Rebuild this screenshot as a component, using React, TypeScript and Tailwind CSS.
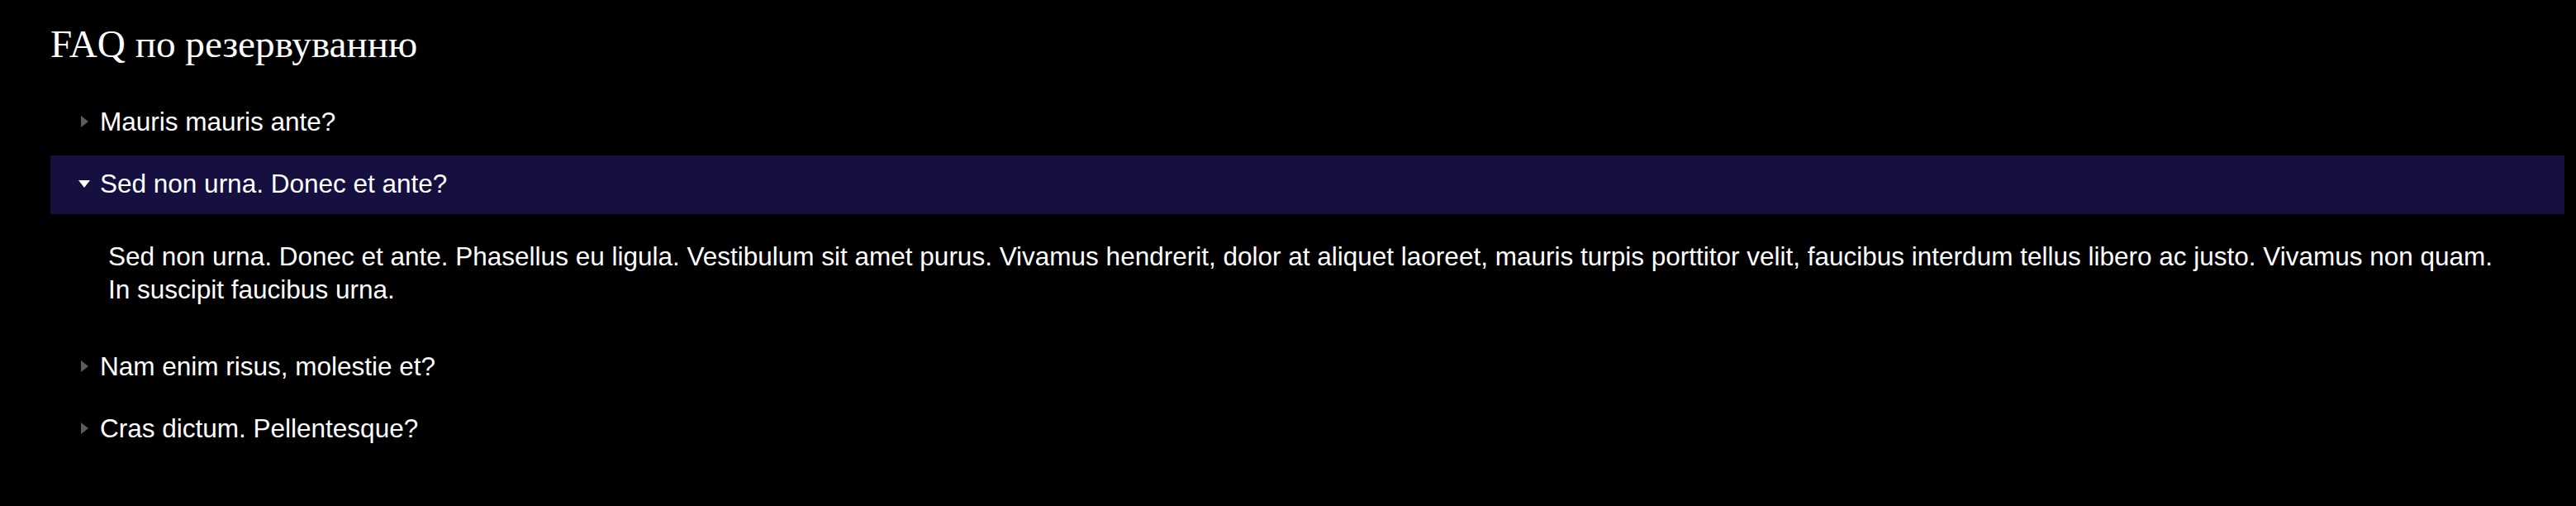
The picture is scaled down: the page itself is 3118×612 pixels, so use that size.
import { useState } from 'react';

const faqs = [
  { q: 'Mauris mauris ante?', a: 'Mauris mauris ante, blandit et, ultrices a, suscipit eget, quam.' },
  {
    q: 'Sed non urna. Donec et ante?',
    a: 'Sed non urna. Donec et ante. Phasellus eu ligula. Vestibulum sit amet purus. Vivamus hendrerit, dolor at aliquet laoreet, mauris turpis porttitor velit, faucibus interdum tellus libero ac justo. Vivamus non quam. In suscipit faucibus urna.',
  },
  { q: 'Nam enim risus, molestie et?', a: 'Nam enim risus, molestie et, porta ac, aliquam ac, risus.' },
  { q: 'Cras dictum. Pellentesque?', a: 'Cras dictum. Pellentesque habitant morbi tristique senectus et netus.' },
];

const App = () => {
  const [open, setOpen] = useState(1);

  return (
    <div className="min-h-screen bg-black text-white pl-[61px] pr-[14px] pt-[27px] font-['Liberation_Sans',Arial,sans-serif]">
      <h1 className="text-[47.2px] leading-[52px] font-['Liberation_Serif','Times_New_Roman',serif] font-normal">
        FAQ по резервуванню
      </h1>

      <div className="mt-[34px] flex flex-col gap-[4px]">
        {faqs.map((item, i) => {
          const isOpen = open === i;
          return (
            <div key={item.q}>
              <button
                onClick={() => setOpen(isOpen ? -1 : i)}
                className={`w-full h-[71px] flex items-center pl-[31px] pb-[3px] text-left text-[31.5px] leading-[36px] ${
                  isOpen ? 'bg-[#15103f]' : 'bg-black'
                }`}
              >
                <span className="w-[20px] flex justify-center">
                  {isOpen ? (
                    <svg width="14" height="9" viewBox="0 0 14 9">
                      <path d="M0 0 L14 0 L7 9 Z" fill="#ffffff" />
                    </svg>
                  ) : (
                    <svg width="9" height="14" viewBox="0 0 9 14">
                      <path d="M0 0 L9 7 L0 14 Z" fill="#5a5a5a" />
                    </svg>
                  )}
                </span>
                <span className="ml-[9px]">{item.q}</span>
              </button>
              {isOpen && (
                <p className="pl-[70px] pr-[56px] pt-[31px] pb-[35px] text-[31.5px] leading-[40px]">
                  {item.a}
                </p>
              )}
            </div>
          );
        })}
      </div>
    </div>
  );
};

export default App;
